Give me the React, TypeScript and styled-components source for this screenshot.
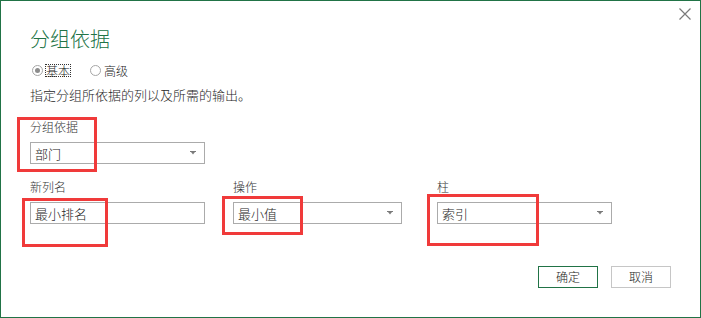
import React from 'react';
import styled, {createGlobalStyle} from 'styled-components';

const GlobalStyle = createGlobalStyle`
  html, body {
    margin: 0;
    padding: 0;
    background: #fff;
  }
  body {
    font-family: "Noto Sans CJK SC", "Noto Sans", sans-serif;
    font-weight: 300;
    color: #333;
  }
  * {
    box-sizing: border-box;
  }
`;

const Dialog = styled.div`
  position: relative;
  width: 701px;
  height: 318px;
  border: 1px solid #217346;
  background: #fff;
  display: flex;
  flex-direction: column;
`;

const CloseRow = styled.div`
  display: flex;
  justify-content: flex-end;
  height: 19px;
  padding: 7px 9px 0 0;
`;

const CloseButton = styled.button`
  width: 12px;
  height: 12px;
  padding: 0;
  border: 0;
  background: none;
  display: block;
`;

const Body = styled.div`
  display: flex;
  flex-direction: column;
  padding: 0 29px;
`;

const Title = styled.h1`
  margin: 9px 0 0;
  font-size: 20px;
  line-height: 20px;
  font-weight: 300;
  color: #217346;
`;

const RadioRow = styled.div`
  display: flex;
  align-items: center;
  height: 13px;
  margin-top: 15px;
`;

const RadioOption = styled.label`
  display: flex;
  align-items: center;
  margin-right: 17px;
`;

const RadioDot = styled.span<{$checked?: boolean}>`
  position: relative;
  width: 11px;
  height: 11px;
  margin: 0 2px;
  border: 1px solid #a6a6a6;
  border-radius: 50%;
  background: #fff;

  &::after {
    content: '';
    display: ${p => (p.$checked ? 'block' : 'none')};
    position: absolute;
    left: 2px;
    top: 2px;
    width: 5px;
    height: 5px;
    border-radius: 50%;
    background: #8c8c8c;
  }
`;

const RadioText = styled.span<{$focused?: boolean}>`
  font-size: 12px;
  line-height: 11px;
  color: #262626;
  border: 1px dotted ${p => (p.$focused ? '#333' : 'transparent')};
`;

const Description = styled.p`
  margin: 11px 0 0;
  font-size: 13px;
  line-height: 13px;
  color: #262626;
`;

const Field = styled.div<{$top?: number}>`
  display: flex;
  flex-direction: column;
  margin-top: ${p => p.$top ?? 0}px;
`;

const FieldLabel = styled.div`
  font-size: 12px;
  line-height: 12px;
  margin-bottom: 9px;
  color: #333;
`;

const Select = styled.div<{$width: number}>`
  width: ${p => p.$width}px;
  height: 22px;
  border: 1px solid #ababab;
  display: flex;
  align-items: center;
  justify-content: space-between;
  padding: 0 8px 0 4px;
  font-size: 13px;
  line-height: 13px;
  color: #262626;
  background: #fff;
`;

const TextInput = styled.input<{$width: number}>`
  width: ${p => p.$width}px;
  height: 22px;
  border: 1px solid #ababab;
  padding: 0 4px;
  font-family: inherit;
  font-weight: 300;
  font-size: 13px;
  color: #262626;
  outline: none;
`;

const FieldRow = styled.div`
  display: grid;
  grid-template-columns: 203px 204px 175px;
  margin-top: 17px;
`;

const ButtonRow = styled.div`
  display: flex;
  justify-content: flex-end;
  gap: 13px;
  margin-top: 42px;
`;

const Button = styled.button<{$primary?: boolean}>`
  width: 60px;
  height: 22px;
  padding: 0;
  border: 1px solid ${p => (p.$primary ? '#217346' : '#c6c6c6')};
  background: #fff;
  font-family: inherit;
  font-weight: 300;
  font-size: 12px;
  line-height: 20px;
  color: #262626;
`;

const Annotation = styled.div<{$left: number; $top: number; $w: number; $h: number}>`
  position: absolute;
  left: ${p => p.$left}px;
  top: ${p => p.$top}px;
  width: ${p => p.$w}px;
  height: ${p => p.$h}px;
  border: 3px solid #f03a3a;
  pointer-events: none;
`;

const Arrow = () => (
  <svg width="6" height="4" viewBox="0 0 6 4">
    <rect x="0" y="0" width="6" height="1" fill="#7a7a7a" />
    <polygon points="1,1 5,1 3,3.5" fill="#7a7a7a" />
  </svg>
);

const CloseIcon = () => (
  <svg width="12" height="12" viewBox="0 0 12 12">
    <path d="M0.5 0.5 L11.5 11.5 M11.5 0.5 L0.5 11.5" stroke="#7a7a7a" strokeWidth="1.2" />
  </svg>
);

const marks = [
  {left: 16, top: 116, w: 80, h: 55},
  {left: 21, top: 197, w: 86, h: 49},
  {left: 221, top: 195, w: 81, h: 39},
  {left: 426, top: 193, w: 112, h: 52},
];

export default function App() {
  return (
    <>
      <GlobalStyle />
      <Dialog>
        <CloseRow>
          <CloseButton aria-label="关闭">
            <CloseIcon />
          </CloseButton>
        </CloseRow>
        <Body>
          <Title>分组依据</Title>
          <RadioRow>
            <RadioOption>
              <RadioDot $checked />
              <RadioText $focused>基本</RadioText>
            </RadioOption>
            <RadioOption>
              <RadioDot />
              <RadioText>高级</RadioText>
            </RadioOption>
          </RadioRow>
          <Description>指定分组所依据的列以及所需的输出。</Description>

          <Field $top={20}>
            <FieldLabel>分组依据</FieldLabel>
            <Select $width={175}>
              <span>部门</span>
              <Arrow />
            </Select>
          </Field>

          <FieldRow>
            <Field>
              <FieldLabel>新列名</FieldLabel>
              <TextInput $width={175} defaultValue="最小排名" />
            </Field>
            <Field>
              <FieldLabel>操作</FieldLabel>
              <Select $width={169}>
                <span>最小值</span>
                <Arrow />
              </Select>
            </Field>
            <Field>
              <FieldLabel>柱</FieldLabel>
              <Select $width={175}>
                <span>索引</span>
                <Arrow />
              </Select>
            </Field>
          </FieldRow>

          <ButtonRow>
            <Button $primary>确定</Button>
            <Button>取消</Button>
          </ButtonRow>
        </Body>
        {marks.map((m, i) => (
          <Annotation key={i} $left={m.left} $top={m.top} $w={m.w} $h={m.h} />
        ))}
      </Dialog>
    </>
  );
}
